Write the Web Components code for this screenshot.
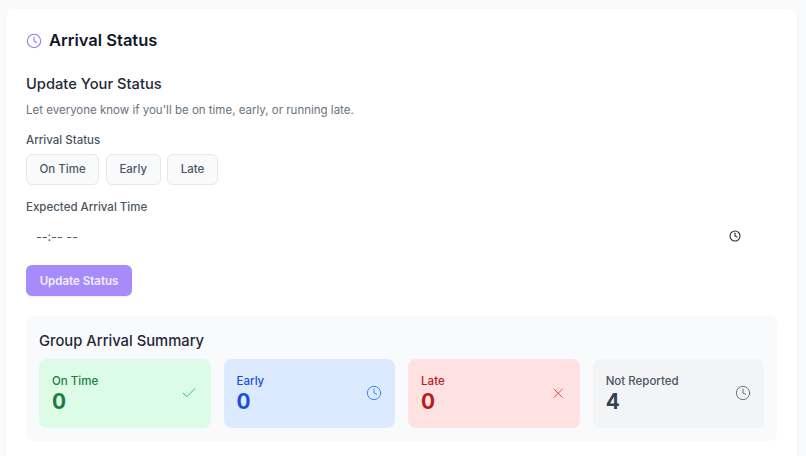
<!DOCTYPE html>
<html><head><meta charset="utf-8"><style>
html,body{margin:0;padding:0;background:#f9fafb;height:456px;overflow:hidden}
body{padding:9px 8px 0 6px;box-sizing:border-box;font-family:Inter,"Liberation Sans",sans-serif}
</style></head><body>
<arrival-card></arrival-card>
<script>
const clock=(s,c,w=2)=>`<svg width="${s}" height="${s}" viewBox="0 0 24 24" fill="none" stroke="${c}" stroke-width="${w}" stroke-linecap="round" stroke-linejoin="round"><circle cx="12" cy="12" r="10"/><polyline points="12 6 12 12 16 14"/></svg>`;
const check=(s,c)=>`<svg width="${s}" height="${s}" viewBox="0 0 24 24" fill="none" stroke="${c}" stroke-width="1.3" stroke-linecap="round" stroke-linejoin="round"><path d="M20 6 9 17l-5-5"/></svg>`;
const cross=(s,c)=>`<svg width="${s}" height="${s}" viewBox="0 0 24 24" fill="none" stroke="${c}" stroke-width="1.4" stroke-linecap="round" stroke-linejoin="round"><path d="M18 6 6 18M6 6l12 12"/></svg>`;
class StatCard extends HTMLElement{
 connectedCallback(){
  const a=n=>this.getAttribute(n);
  const icons={check:check(18,'#22c55e'),clock:clock(16,a('ic'),1.5),cross:cross(16.5,'#ef4444')};
  this.attachShadow({mode:'open'}).innerHTML=`<style>
  :host{display:flex;align-items:center;justify-content:space-between;box-sizing:border-box;height:69px;padding:0 12.8px 0 13px;border-radius:8px;background:${a('bg')}}
  .l{font-size:11.5px;font-weight:500;line-height:15px;color:${a('lc')}}
  .v{font-size:20.8px;font-weight:700;line-height:25px;color:${a('vc')}}
  .t{margin-top:1px}
  .i{display:flex;align-items:center;justify-content:center;width:18px;height:18px}
  svg{display:block}
  </style><div class="t"><div class="l">${a('label')}</div><div class="v">${a('value')}</div></div><div class="i">${icons[a('icon')]}</div>`;
 }
}
customElements.define('stat-card',StatCard);
class StatusChip extends HTMLElement{
 connectedCallback(){
  this.attachShadow({mode:'open'}).innerHTML=`<style>
  :host{display:block;box-sizing:border-box;height:31px;padding:0 12.5px;line-height:29px;border:1px solid #e5e7eb;border-radius:6px;background:#f9fafb;font-size:11.5px;font-weight:500;color:#4b5563}
  </style><slot></slot>`;
 }
}
customElements.define('status-chip',StatusChip);
class ArrivalCard extends HTMLElement{
 connectedCallback(){
  this.attachShadow({mode:'open'}).innerHTML=`<style>
  :host{display:block;box-sizing:border-box;width:791.4px;height:460px;padding:20px;background:#fff;border-radius:8px;box-shadow:0 1px 3px rgba(0,0,0,.06);color:#111827}
  header{display:flex;align-items:center;gap:7px;height:23px}
  header svg{display:block}
  h2{margin:0;font-size:16.5px;font-weight:600;line-height:23px;color:#111827}
  h3{margin:22px 0 0;font-size:14.7px;font-weight:500;line-height:20px;color:#1f2937}
  p{margin:7px 0 0;font-size:11.5px;line-height:18px;color:#6b7280}
  label{display:block;font-size:11.5px;font-weight:500;line-height:16px;color:#4b5563}
  .l1{margin-top:13px}
  .chips{display:flex;gap:6.7px;margin-top:6px}
  .l2{margin-top:14px}
  .time{display:flex;align-items:center;justify-content:space-between;height:32px;margin-top:5px;padding:0 36px 0 10px;font-size:12.6px;color:#4b5563}
  .time svg{display:block}
  button{display:block;box-sizing:border-box;margin:13px 0 0;width:106px;height:31px;padding:1px 0 0;border:0;border-radius:6px;background:#a78bfa;color:#f3effe;font:600 11.5px/30px Inter,"Liberation Sans",sans-serif;box-shadow:0 1px 2px rgba(0,0,0,.08)}
  section{margin-top:19.5px;padding:14px 13px 13px;border-radius:8px;background:#f9fafb;height:125px;box-sizing:border-box}
  h4{margin:0;font-size:14.75px;font-weight:500;line-height:22px;color:#1f2937}
  .grid{display:grid;grid-template-columns:repeat(4,1fr);gap:12.8px;margin-top:7px}
  </style>
  <header>${clock(16,'#8b7cf0',1.6)}<h2>Arrival Status</h2></header>
  <h3>Update Your Status</h3>
  <p>Let everyone know if you'll be on time, early, or running late.</p>
  <label class="l1">Arrival Status</label>
  <div class="chips"><status-chip>On Time</status-chip><status-chip>Early</status-chip><status-chip>Late</status-chip></div>
  <label class="l2">Expected Arrival Time</label>
  <div class="time"><span>--:-- --</span>${clock(12,'#1f2937',2.2)}</div>
  <button>Update Status</button>
  <section><h4>Group Arrival Summary</h4><div class="grid">
   <stat-card label="On Time" value="0" icon="check" bg="#dcfce7" lc="#15803d" vc="#15803d"></stat-card>
   <stat-card label="Early" value="0" icon="clock" ic="#3b82f6" bg="#dbeafe" lc="#1d4ed8" vc="#1d4ed8"></stat-card>
   <stat-card label="Late" value="0" icon="cross" bg="#fee2e2" lc="#b91c1c" vc="#b91c1c"></stat-card>
   <stat-card label="Not Reported" value="4" icon="clock" ic="#6b7280" bg="#f3f4f6" lc="#4b5563" vc="#374151"></stat-card>
  </div></section>`;
 }
}
customElements.define('arrival-card',ArrivalCard);
</script></body></html>
